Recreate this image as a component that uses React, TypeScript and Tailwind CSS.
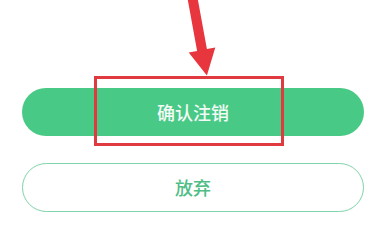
import React from "react";

export default function App() {
  return (
    <div
      className="relative w-[386px] h-[242px] bg-white overflow-hidden"
      style={{ fontFamily: '"Noto Sans CJK SC", "Noto Sans", sans-serif' }}
    >
      <div className="flex flex-col gap-[27px] px-[22px] pt-[88px]">
        <button className="h-[48px] w-full rounded-full bg-[#48c986] text-[18px] font-medium text-[#f4fbf6] flex items-center justify-center">
          确认注销
        </button>
        <button className="h-[49px] w-full rounded-full border-[1.5px] border-[#7fd3a9] bg-white text-[18px] font-medium text-[#4fbd86] flex items-center justify-center">
          放弃
        </button>
      </div>

      <div className="absolute left-[94px] top-[76px] w-[190px] h-[70px] border-[3px] border-[#e0393f]" />

      <svg
        className="absolute left-0 top-0 pointer-events-none"
        width="386"
        height="242"
        viewBox="0 0 386 242"
      >
        <polygon
          points="187.6,-1.1 197.4,-2.9 206.9,49.1 215.3,47.5 206.9,75.5 188.7,52.5 197.1,50.9"
          fill="#e8363e"
        />
      </svg>
    </div>
  );
}
